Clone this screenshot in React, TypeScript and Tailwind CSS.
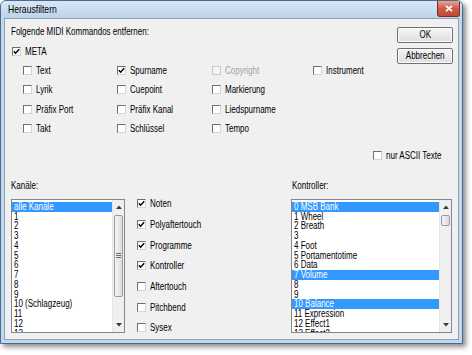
import React from "react";

function T({ children, center = false }: { children: React.ReactNode; center?: boolean }) {
  return (
    <span
      className={
        center
          ? "inline-block origin-center scale-x-[0.8] whitespace-nowrap"
          : "inline-block origin-left scale-x-[0.8] whitespace-nowrap"
      }
    >
      {children}
    </span>
  );
}

function Box({ checked = false, disabled = false }: { checked?: boolean; disabled?: boolean }) {
  return (
    <span
      className={
        disabled
          ? "relative w-[9px] h-[9px] shrink-0 border border-[#c8c8c8] bg-[#f4f4f4]"
          : "relative w-[9px] h-[9px] shrink-0 border border-t-[#6f6f6f] border-l-[#6f6f6f] border-r-[#d4d4d4] border-b-[#d4d4d4] bg-white"
      }
    >
      {checked && (
        <svg viewBox="0 0 7 7" className="absolute inset-0 w-[7px] h-[7px]">
          <path d="M0.8 3.2 L2.6 5.2 L6.2 1.2" fill="none" stroke="#000" strokeWidth="1.4" />
        </svg>
      )}
    </span>
  );
}

function Check({ label, checked = false, disabled = false }: { label: string; checked?: boolean; disabled?: boolean }) {
  return (
    <div className="flex items-center gap-[4px] h-full">
      <Box checked={checked} disabled={disabled} />
      <span className={disabled ? "text-[#a3a3a3]" : ""}>
        <T>{label}</T>
      </span>
    </div>
  );
}

function Arrow({ up }: { up: boolean }) {
  return (
    <div className="h-[14px] flex items-center justify-center">
      <svg viewBox="0 0 6 4" className="w-[6px] h-[4px]">
        {up ? <path d="M0 4 L3 0.5 L6 4 Z" fill="#3a3a3a" /> : <path d="M0 0 L3 3.5 L6 0 Z" fill="#3a3a3a" />}
      </svg>
    </div>
  );
}

function ListBox({
  items,
  selected,
  thumbH,
  grip,
  width,
}: {
  items: string[];
  selected: number[];
  thumbH: string;
  grip: boolean;
  width: string;
}) {
  return (
    <div className={`${width} h-[134px] border border-[#828790] bg-white flex overflow-hidden`}>
      <div className="flex-1 pt-[2px] overflow-hidden">
        {items.map((it, i) => (
          <div
            key={i}
            className={
              selected.includes(i)
                ? "h-[9.75px] leading-[9.75px] pl-[2px] bg-[#3399ff] text-white"
                : "h-[9.75px] leading-[9.75px] pl-[2px]"
            }
          >
            <T>{it}</T>
          </div>
        ))}
      </div>
      <div className="w-[12px] bg-[#f0f0f0] border-l border-[#e6e6e6] flex flex-col">
        <Arrow up />
        <div className="flex-1 px-[1px]">
          <div
            className={`${thumbH} mt-[1px] rounded-[2px] border border-[#9b9b9b] bg-gradient-to-r from-[#f4f4f4] to-[#dcdcdc] flex flex-col items-center justify-center gap-[1px]`}
          >
            {grip && (
              <>
                <div className="w-[5px] h-[1px] bg-[#6a6a6a]" />
                <div className="w-[5px] h-[1px] bg-[#6a6a6a]" />
                <div className="w-[5px] h-[1px] bg-[#6a6a6a]" />
              </>
            )}
          </div>
        </div>
        <Arrow up={false} />
      </div>
    </div>
  );
}

function Button({ label }: { label: string }) {
  return (
    <div className="h-[16px] border border-[#707070] rounded-[2px] bg-gradient-to-b from-[#f6f6f6] to-[#dedede] flex items-center justify-center shadow-[inset_0_0_0_1px_#fbfbfb]">
      <T center>{label}</T>
    </div>
  );
}

export default function App() {
  const kanale = ["alle Kanäle", "1", "2", "3", "4", "5", "6", "7", "8", "9", "10 (Schlagzeug)", "11", "12", "13"];
  const kontroller = [
    "0 MSB Bank",
    "1 Wheel",
    "2 Breath",
    "3",
    "4 Foot",
    "5 Portamentotime",
    "6 Data",
    "7 Volume",
    "8",
    "9",
    "10 Balance",
    "11 Expression",
    "12 Effect1",
    "13 Effect2",
  ];

  return (
    <div className="w-[472px] h-[355px] bg-white text-black text-[10px] font-['Liberation_Sans',Arial,sans-serif]">
      <div className="w-[463px] h-[344px] flex flex-col border border-[#4b6b8c] rounded-t-[6px] bg-[#c3d7ec] shadow-[3px_3px_5px_rgba(0,0,0,0.45)] overflow-hidden">
        {/* title bar */}
        <div className="h-[17px] flex items-start bg-gradient-to-b from-[#d9e7f5] to-[#bed3ea]">
          <div className="flex-1 pl-[7px] h-full flex items-center text-[10.5px]">
            <span className="inline-block origin-left scale-x-[0.82] whitespace-nowrap">Herausfiltern</span>
          </div>
          <div className="w-[23px] h-[16px] mr-[2px] rounded-b-[3px] border border-t-0 border-[#7a2e22] bg-gradient-to-b from-[#e9a392] via-[#cf5a45] to-[#c04a36] flex items-center justify-center">
            <svg viewBox="0 0 8 7" className="w-[8px] h-[7px]">
              <path d="M1 0.8 L7 6.2 M7 0.8 L1 6.2" stroke="#fff" strokeWidth="1.8" />
            </svg>
          </div>
        </div>
        {/* body */}
        <div className="flex-1 mx-[3px] mb-[3px] border border-[#8aa3bd] bg-[#f0f0f0] flex flex-col">
          {/* top section */}
          <div className="flex pl-[6px] pr-[5px] pt-[3.35px]">
            <div className="flex-1 flex flex-col">
              <div className="h-[19.3px] flex items-center">
                <T>Folgende MIDI Kommandos entfernen:</T>
              </div>
              <div className="h-[19.3px] pl-[1px]">
                <Check label="META" checked />
              </div>
              <div className="grid grid-cols-[94px_95px_101px_auto] grid-rows-[repeat(4,19.3px)] pl-[12px]">
                <Check label="Text" />
                <Check label="Spurname" checked />
                <Check label="Copyright" disabled />
                <Check label="Instrument" />
                <Check label="Lyrik" />
                <Check label="Cuepoint" />
                <Check label="Markierung" />
                <div />
                <Check label="Präfix Port" />
                <Check label="Präfix Kanal" />
                <Check label="Liedspurname" />
                <div />
                <Check label="Takt" />
                <Check label="Schlüssel" />
                <Check label="Tempo" />
                <div />
              </div>
            </div>
            <div className="w-[56px] pt-[4.65px] flex flex-col gap-[5px]">
              <Button label="OK" />
              <Button label="Abbrechen" />
            </div>
          </div>
          {/* ASCII */}
          <div className="flex justify-end pr-[5px] mt-[8.2px] h-[19.3px]">
            <div className="w-[80px]">
              <Check label="nur ASCII Texte" />
            </div>
          </div>
          {/* bottom */}
          <div className="flex pl-[6px] mt-[10.7px]">
            <div className="w-[114px] flex flex-col">
              <div className="h-[19.3px] flex items-center">
                <T>Kanäle:</T>
              </div>
              <div className="mt-[3.35px]">
                <ListBox items={kanale} selected={[0]} thumbH="h-[82px]" grip width="w-[114px]" />
              </div>
            </div>
            <div className="w-[154px] ml-[12px] pt-[17.3px] flex flex-col">
              {[
                ["Noten", true],
                ["Polyaftertouch", true],
                ["Programme", true],
                ["Kontroller", true],
                ["Aftertouch", false],
                ["Pitchbend", false],
                ["Sysex", false],
              ].map(([l, c]) => (
                <div key={l as string} className="h-[20.67px]">
                  <Check label={l as string} checked={c as boolean} />
                </div>
              ))}
            </div>
            <div className="w-[161px] flex flex-col">
              <div className="h-[19.3px] flex items-center pl-[1px]">
                <T>Kontroller:</T>
              </div>
              <div className="mt-[3.35px]">
                <ListBox items={kontroller} selected={[0, 7, 10]} thumbH="h-[11px]" grip={false} width="w-[161px]" />
              </div>
            </div>
          </div>
        </div>
      </div>
    </div>
  );
}
